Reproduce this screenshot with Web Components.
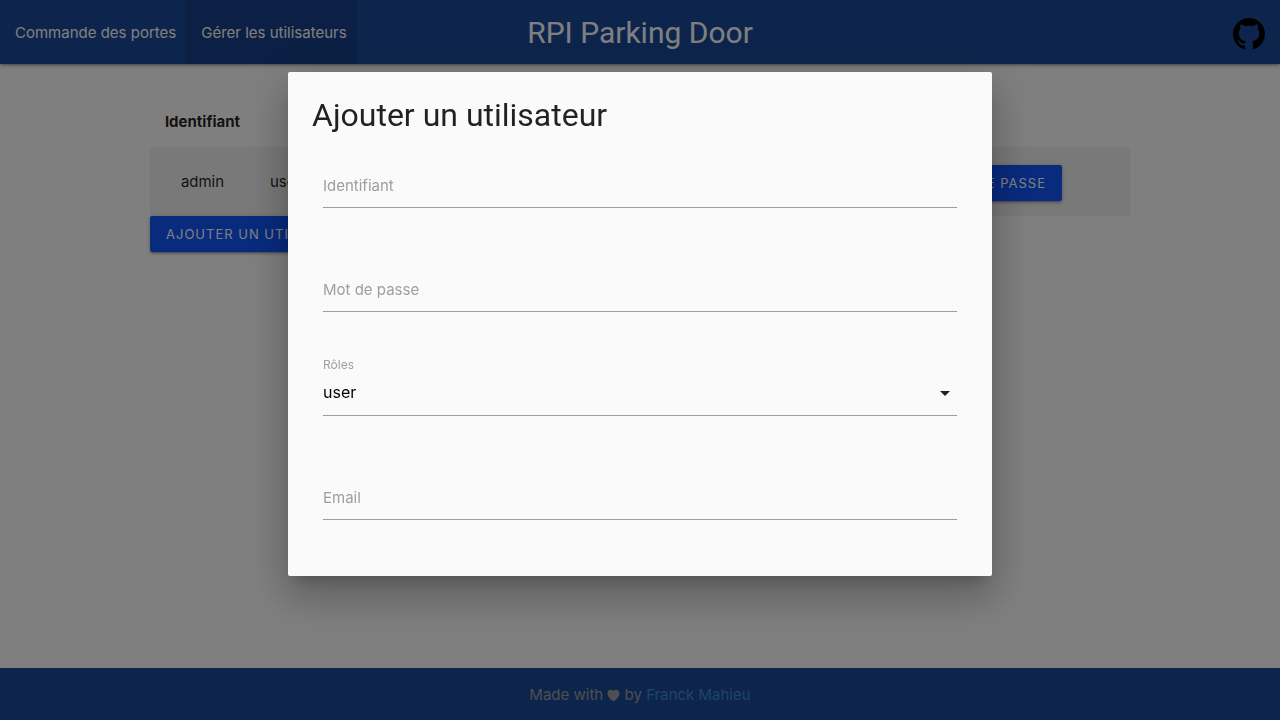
<!DOCTYPE html>
<html lang="fr">
<head>
<meta charset="utf-8">
<title>RPI Parking Door</title>
<style>
html, body { margin: 0; height: 100%; }
body { font: 15px/22px Inter, "Liberation Sans", sans-serif; color: rgba(0,0,0,.87); background: #fff; overflow: hidden; }
</style>
</head>
<body>
<parking-app></parking-app>
<script>
const define = (name, html, setup) => customElements.define(name, class extends HTMLElement {
  connectedCallback() {
    if (this.shadowRoot) return;
    const root = this.attachShadow({ mode: 'open' });
    const t = document.createElement('template');
    t.innerHTML = '<style>*{box-sizing:border-box}</style>' + html;
    root.append(t.content.cloneNode(true));
    if (setup) setup(this, root);
  }
});

define('action-button', `
<style>
:host { display: inline-block; vertical-align: middle; }
button { display: block; height: 36px; padding: 0 16px; border: 0; border-radius: 2px; background: #1056fd; color: #fff;
  font: 13px/36px Inter, "Liberation Sans", sans-serif; letter-spacing: 1px; text-transform: uppercase; white-space: nowrap;
  box-shadow: 0 2px 2px rgba(0,0,0,.14), 0 3px 1px -2px rgba(0,0,0,.12), 0 1px 5px rgba(0,0,0,.2); }
</style>
<button type="button"><slot></slot></button>`);

define('nav-link', `
<style>
:host { display: block; }
a { display: block; height: 64px; padding: 2px 10px 0 15px; color: #fff; text-decoration: none; line-height: 62px; }
:host([active]) a { background: #18408b; }
</style>
<a href="#"><slot></slot></a>`);

define('app-header', `
<style>
:host { display: block; position: relative; z-index: 1; background: #1a4a99; color: #fff;
  box-shadow: 0 2px 2px rgba(0,0,0,.14), 0 3px 1px -2px rgba(0,0,0,.12), 0 1px 5px rgba(0,0,0,.2); }
nav { display: grid; grid-template-columns: 1fr auto 1fr; height: 64px; }
.links { display: flex; }
.title { color: inherit; text-decoration: none; font-family: Roboto, sans-serif; font-size: 30px; line-height: 62px; padding-top: 2px; }
.git { justify-self: end; align-self: center; display: block; height: 32px; margin: 4px 15px 0 0; color: #000; }
svg { display: block; }
</style>
<nav>
  <div class="links"><nav-link>Commande des portes</nav-link><nav-link active>Gérer les utilisateurs</nav-link></div>
  <a class="title" href="#">RPI Parking Door</a>
  <a class="git" href="#" aria-label="GitHub"><svg width="32" height="32" viewBox="0 0 16 16" fill="currentColor"><path d="M8 0C3.58 0 0 3.58 0 8c0 3.54 2.29 6.53 5.47 7.59.4.07.55-.17.55-.38 0-.19-.01-.82-.01-1.49-2.01.37-2.53-.49-2.69-.94-.09-.23-.48-.94-.82-1.13-.28-.15-.68-.52-.01-.53.63-.01 1.08.58 1.23.82.72 1.21 1.87.87 2.33.66.07-.52.28-.87.51-1.07-1.78-.2-3.64-.89-3.64-3.95 0-.87.31-1.59.82-2.15-.08-.2-.36-1.02.08-2.12 0 0 .67-.21 2.2.82.64-.18 1.32-.27 2-.27s1.36.09 2 .27c1.53-1.04 2.2-.82 2.2-.82.44 1.1.16 1.92.08 2.12.51.56.82 1.27.82 2.15 0 3.07-1.87 3.75-3.65 3.95.29.25.54.73.54 1.48 0 1.07-.01 1.93-.01 2.2 0 .21.15.46.55.38A8.01 8.01 0 0 0 16 8c0-4.42-3.58-8-8-8z"/></svg></a>
</nav>`);

define('user-list', `
<style>
:host { display: block; width: 100%; max-width: 980px; margin: 0 auto; padding-top: 31px; }
table { width: 100%; border-collapse: collapse; }
th, td { text-align: center; }
th { padding: 16px 5px 14px; font-weight: 700; }
td { height: 69px; padding: 15px; }
tbody tr { background: #f2f2f2; }
th:first-child { width: 105px; }
.roles { text-align: left; width: 110px; }
td.actions { text-align: right; padding: 17px 68px 15px 15px; }
</style>
<table>
  <thead><tr><th>Identifiant</th><th class="roles"></th><th></th></tr></thead>
  <tbody><tr><td>admin</td><td class="roles">user</td><td class="actions"><action-button>Changer le mot de passe</action-button></td></tr></tbody>
</table>
<action-button>Ajouter un utilisateur</action-button>`);

define('app-footer', `
<style>
:host { display: block; background: #1a4a99; color: #9e9e9e; text-align: center; padding: 16px 0 14px; }
a { color: #3a8cd0; text-decoration: none; }
svg { display: inline-block; width: 13px; height: 13px; vertical-align: -2px; }
</style>
Made with <svg viewBox="0 0 13 13" fill="currentColor" role="img" aria-label="love"><path d="M6.500 12.500C5 11 .5 8.500 .5 4.200 .5 .2 5-.3 6.500 2 8-.3 12.500 .2 12.500 4.200 12.500 8.500 8 11 6.500 12.500z"/></svg> by <a href="#">Franck Mahieu</a>`);

define('text-field', `
<style>
:host { display: grid; }
label, input { grid-area: 1 / 1; }
label { color: #9e9e9e; align-self: center; pointer-events: none; }
input { width: 100%; height: 45px; padding: 0; border: 0; border-bottom: 1px solid #9e9e9e; border-radius: 0; outline: 0; background: none; font: 16px Inter, sans-serif; }
</style>
<input id="field"><label for="field"></label>`, (host, root) => {
  root.querySelector('label').textContent = host.getAttribute('label');
  root.querySelector('input').type = host.getAttribute('type') || 'text';
});

define('select-field', `
<style>
:host { display: grid; position: relative; }
label { position: absolute; top: -15px; left: 0; color: #9e9e9e; font-size: 12px; line-height: 18px; }
select, svg { grid-area: 1 / 1; }
select { appearance: none; width: 100%; height: 45px; padding: 0 0 2px; border: 0; border-bottom: 1px solid #9e9e9e; border-radius: 0; outline: 0; background: none; color: #000; font: 16px Inter, sans-serif; }
svg { justify-self: end; align-self: center; margin-bottom: 2px; pointer-events: none; }
</style>
<label for="field"></label>
<select id="field"><option>user</option><option>admin</option></select>
<svg width="24" height="24" viewBox="0 0 24 24" fill="#212121"><path d="M7 10l5 5 5-5z"/></svg>`, (host, root) => {
  root.querySelector('label').textContent = host.getAttribute('label');
});

define('user-dialog', `
<style>
:host { position: fixed; inset: 0; z-index: 10; background: rgba(0,0,0,.5); }
section { width: 55%; height: 70%; margin: 10vh auto 0; padding: 24px; overflow: auto; border-radius: 2px; background: #fafafa;
  box-shadow: 0 24px 38px 3px rgba(0,0,0,.14), 0 9px 46px 8px rgba(0,0,0,.12), 0 11px 15px -7px rgba(0,0,0,.2); }
h4 { margin: 0; font-family: Roboto, sans-serif; font-weight: 400; font-size: 32px; line-height: 38px; }
form { display: grid; gap: 59px; padding: 29px 11px 0; }
</style>
<section role="dialog" aria-modal="true" aria-labelledby="heading">
  <h4 id="heading">Ajouter un utilisateur</h4>
  <form>
    <text-field label="Identifiant"></text-field>
    <text-field label="Mot de passe" type="password"></text-field>
    <select-field label="Rôles"></select-field>
    <text-field label="Email" type="email"></text-field>
  </form>
</section>`);

define('parking-app', `
<style>
:host { display: flex; flex-direction: column; min-height: 100vh; }
main { flex: 1; }
</style>
<app-header></app-header>
<main><user-list></user-list></main>
<app-footer></app-footer>
<user-dialog></user-dialog>`);
</script>
</body>
</html>
